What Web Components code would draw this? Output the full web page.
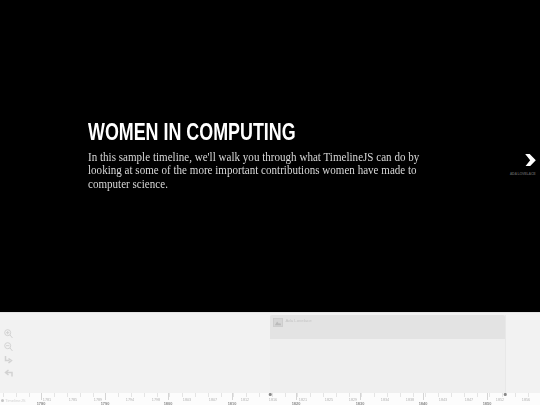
<!DOCTYPE html>
<html><head><meta charset="utf-8">
<style>
html,body{margin:0;padding:0;width:540px;height:405px;overflow:hidden;background:#000}
tl-app{display:flex;flex-direction:column;width:540px;height:405px}
</style></head><body>
<tl-app>
  <tl-story title-text="WOMEN IN COMPUTING" next="ADA LOVELACE">In this sample timeline, we'll walk you through what TimelineJS can do by looking at some of the more important contributions women have made to computer science.</tl-story>
  <tl-nav></tl-nav>
</tl-app>
<script>
class TlApp extends HTMLElement{constructor(){super();this.attachShadow({mode:'open'}).innerHTML='<style>:host{display:flex;flex-direction:column}</style><slot></slot>'}}
class TlStory extends HTMLElement{constructor(){super();const s=this.attachShadow({mode:'open'});
s.innerHTML=`<style>
:host{display:flex;height:312px;background:#000;color:#fff;align-items:center;flex:none}
.txt{margin-left:88px;width:340px;padding-bottom:3px}
h2{margin:0 0 5px;font:700 24px/28px "Liberation Sans",sans-serif;color:#fff;transform:scaleX(.745);transform-origin:0 50%;white-space:nowrap}
p{margin:0;width:378px;font:12.4px/13.4px "Liberation Serif",serif;color:#d8d8d8;transform:scaleX(.89);transform-origin:0 50%;letter-spacing:.02px}
.next{margin-left:auto;width:60px;display:flex;flex-direction:column;align-items:flex-end;gap:5px;padding-top:19px}
.next svg{margin-right:4px;display:block}
.next span{font:700 3.6px/6px "Liberation Sans",sans-serif;letter-spacing:-.2px;color:#555;margin-right:4.5px;white-space:nowrap}
</style>
<div class="txt"><h2>${this.getAttribute('title-text')}</h2><p><slot></slot></p></div>
<div class="next"><svg width="11" height="12.5" viewBox="0 0 11 12.5"><path d="M.2 0H4.700L10.800 6.250L4.700 12.500H.2L5.200 6.250Z" fill="#fff"/></svg><span>${this.getAttribute('next')}</span></div>`}}
class TlNav extends HTMLElement{constructor(){super();const s=this.attachShadow({mode:'open'});
const minor=[47,73,98,130,156,187,213,245,273,303,329,353,385,410,443,469,500,526];
const mn=[1781,1785,1789,1794,1798,1803,1807,1812,1816,1821,1825,1829,1834,1838,1843,1847,1852,1856];
const major=[41,105,168,232,296,360,423,487];
const mj=[1780,1790,1800,1810,1820,1830,1840,1850];
s.innerHTML=`<style>
:host{display:block;position:relative;height:93px;background:#f2f2f2;flex:none}
.stage{height:81px;border-top:1px solid #e4e4e4;box-sizing:border-box;display:flex;position:relative;filter:blur(.2px)}
.tools{width:16px;padding:16px 0 0 4px;display:flex;flex-direction:column;gap:3px}
.tools svg{display:block;width:9px;height:10px}
.era{position:absolute;left:270px;top:2px;width:236px;height:78px;background:#efefef;border-right:1px solid #e8e8e8;box-sizing:border-box}
.flag{height:23.5px;background:#e3e3e3;border-radius:2px 2px 0 0;display:flex;gap:3px;padding:3px 0 0 2.5px;box-sizing:border-box}
.flag svg{width:10px;height:9px}
.flag span{font:4.3px/6px "Liberation Sans",sans-serif;color:#c4c4c4}
.ruler{height:12px;background:#fcfcfc;position:relative;overflow:hidden;filter:blur(.25px);
 background-image:repeating-linear-gradient(90deg,#e4e4e4 0 1px,transparent 1px 12.8px);background-size:100% 4px;background-repeat:no-repeat;background-position:3px 0}
.l{position:absolute;transform:translateX(-50%);font:3.8px/5px "Liberation Sans",sans-serif;color:#b4b4b4;top:5px}
.m{position:absolute;transform:translateX(-50%);font:700 3.9px/3.5px "Liberation Sans",sans-serif;color:#888;top:8.5px}
.t{position:absolute;top:0;width:1px;height:7px;background:#d4d4d4}
.dot{position:absolute;top:0;width:2.500px;height:2.500px;border-radius:50%;background:#888;transform:translateX(-50%)}
.brand{position:absolute;left:1px;top:5px;font:4.200px/5px "Liberation Sans",sans-serif;color:#d4d4d4;display:flex;gap:1px;align-items:center}
.brand i{width:3px;height:3px;border-radius:50%;background:#c4c4c4}
</style>
<div class="stage">
 <div class="tools">
  <svg viewBox="0 0 9 10"><circle cx="3.700" cy="3.700" r="3" fill="none" stroke="#d2d2d2"/><path d="M6 6L8.500 9M2 3.700H5.400M3.700 2V5.400" stroke="#d2d2d2" fill="none"/></svg>
  <svg viewBox="0 0 9 10"><circle cx="3.700" cy="3.700" r="3" fill="none" stroke="#d2d2d2"/><path d="M6 6L8.500 9M2 3.700H5.400" stroke="#d2d2d2" fill="none"/></svg>
  <svg viewBox="0 0 9 10"><path d="M1.500 1V5.500H5.500M4.500 3.500L7.500 5.500L4.500 8" fill="none" stroke="#d2d2d2" stroke-width="1.500"/></svg>
  <svg viewBox="0 0 9 10"><path d="M8 8.500V4.500H2.500M4.500 2L1.500 4.500L4.500 7" fill="none" stroke="#d2d2d2" stroke-width="1.500"/></svg>
 </div>
 <div class="era"><div class="flag"><svg viewBox="0 0 11 10"><rect x=".5" y=".5" width="10" height="9" fill="#d6d6d6" stroke="#ccc"/><path d="M2 8L4.500 4L6.500 6.500L8 5.500L9 8Z" fill="#bbb"/></svg><span>Ada Lovelace</span></div></div>
</div>
<div class="ruler">
 ${major.map(x=>`<div class="t" style="left:${x}px"></div>`).join('')}
 <div class="dot" style="left:270px"></div><div class="dot" style="left:505px"></div>
 <div class="brand"><i></i>TimelineJS</div>
 ${minor.map((x,i)=>`<div class="l" style="left:${x}px">${mn[i]}</div>`).join('')}
 ${major.map((x,i)=>`<div class="m" style="left:${x}px">${mj[i]}</div>`).join('')}
</div>`}}
customElements.define('tl-app',TlApp);customElements.define('tl-story',TlStory);customElements.define('tl-nav',TlNav);
</script>
</body></html>
